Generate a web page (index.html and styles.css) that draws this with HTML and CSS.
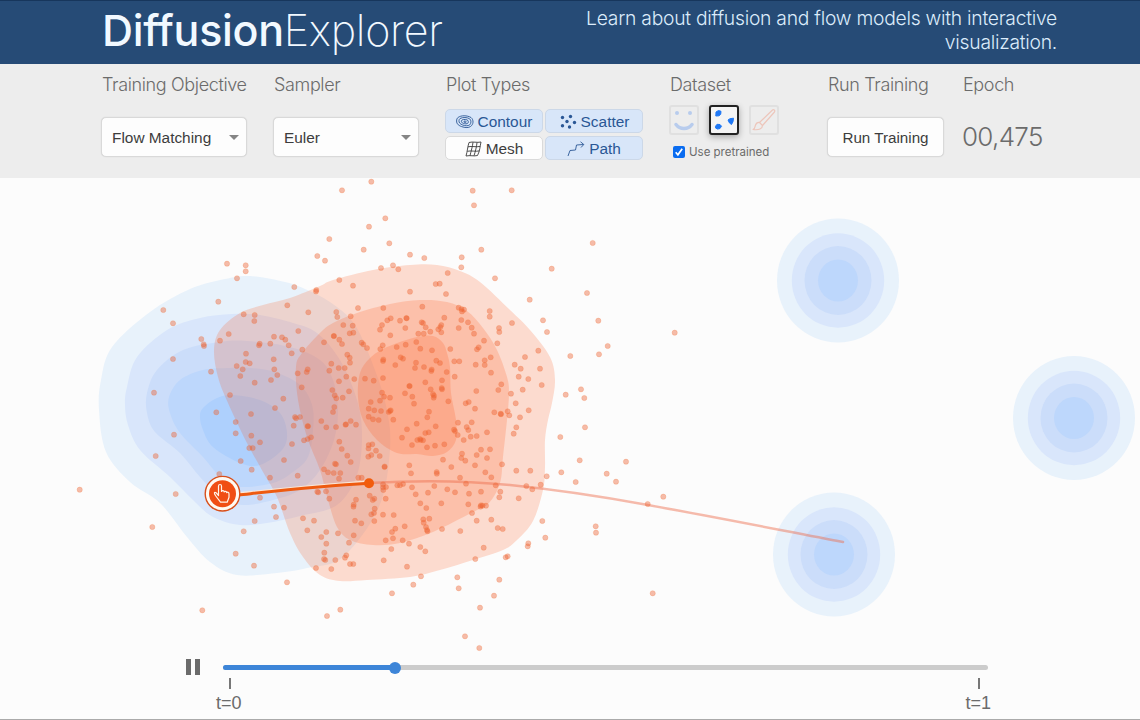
FILE: index.html
```html
<!DOCTYPE html>
<html lang="en">
<head>
    <meta charset="UTF-8" />
    <meta name="viewport" content="width=device-width, initial-scale=1.0" />
    <title>Diffusion Explorer</title>
    <link rel="stylesheet" href="styles.css">
</head>
<body>
    <header>
        <h1><strong>Diffusion</strong>Explorer</h1>
        <p>Learn about diffusion and flow models with interactive visualization.</p>
    </header>

    <section class="toolbar">
        <div class="control">
            <h2>Training Objective</h2>
            <button class="select">Flow Matching <span class="caret"></span></button>
        </div>
        <div class="control">
            <h2>Sampler</h2>
            <button class="select">Euler <span class="caret"></span></button>
        </div>
        <div class="control">
            <h2>Plot Types</h2>
            <div class="plot-types">
                <button class="toggle active">
                    <svg width="18" height="14" viewBox="0 0 18 14">
                        <path d="M2 2.5C5 .2 11 .2 15 2.5c3 2.5 2.500 7-.5 9-2 1.500-5 1.200-7.500.5C3 11 .5 9 .6 6 .6 4.500 1 3.200 2 2.500z" />
                        <path d="M4 3.500c3-1.500 7-1.200 9.500.2 2 1.600 1.800 4.600.2 6.200-1.700 1.300-5 .9-7 .1C4 9 2.700 7.500 3 5.500c.1-.9.400-1.500 1-2z" />
                        <path d="M6 5c2-1 5-.6 6 .6.8 1.300.2 2.700-1 3.100-1.500.3-3.500 0-4.700-.8C5.200 7 5 5.600 6 5z" />
                        <path d="M8 6.200c1-.3 2.300 0 2.300.7S8.700 7.500 8 7.200z" />
                    </svg>
                    Contour
                </button>
                <button class="toggle active">
                    <svg class="solid" width="18" height="16" viewBox="0 0 18 16">
                        <circle cx="3.500" cy="3.500" r="1.700" /><circle cx="11.500" cy="2.500" r="1.700" />
                        <circle cx="8" cy="7.500" r="1.700" /><circle cx="3.500" cy="11.800" r="1.700" />
                        <circle cx="15.500" cy="8.500" r="1.700" /><circle cx="10.500" cy="13" r="1.700" />
                    </svg>
                    Scatter
                </button>
                <button class="toggle">
                    <svg width="17" height="16" viewBox="0 0 17 16">
                        <path d="M4 1.500C8 .3 12 2 16 1c-1 4-1 9-3.500 13.500-4 1-7-.5-11.500.5C2.500 10 2.500 6 4 1.500z" />
                        <path d="M8 1.200C7.500 6 6 10 5 14.800M12 1.600C11.500 6 10.500 10 9 14.800M3 5.800c4-1 8 .6 12.200-.4M2.300 10.300c4-1 8 .6 12-.4" />
                    </svg>
                    Mesh
                </button>
                <button class="toggle active">
                    <svg width="18" height="16" viewBox="0 0 18 16">
                        <path d="M1 15l2-5.500 5.500-.5 1-5 7-.5M13.500.8l3.300 2.700-2.800 3" />
                    </svg>
                    Path
                </button>
            </div>
        </div>
        <div class="control">
            <h2>Dataset</h2>
            <div class="datasets">
                <button class="dataset">
                    <svg width="26" height="26" viewBox="0 0 26 26">
                        <circle cx="6" cy="6" r="2" fill="#1f6df0" /><circle cx="19" cy="6" r="2" fill="#1f6df0" />
                        <path d="M5 17.500c4 5.300 12 5.300 16 0" fill="none" stroke="#1f6df0" stroke-width="3.500" stroke-linecap="round" />
                    </svg>
                </button>
                <button class="dataset selected">
                    <svg width="26" height="26" viewBox="0 0 26 26">
                        <path d="M5 5l2.500-1.500 2.500.8-.3 3-1.700 1.500-3.200.2zM4.500 19.300l1.500-2 3 .2 1.500 1.700-1.500 2.300-2.500.6-2-1.200zM17 13l2-1.300 3.500-.5-.5 3.500-1.500 2.800-2-1.500z" fill="#1f78f5" stroke="#1f78f5" stroke-linejoin="round" />
                    </svg>
                </button>
                <button class="dataset">
                    <svg width="26" height="26" viewBox="0 0 26 26">
                        <path d="M8.500 15.500L21.500 3c1-1 3 .5 2 2L11.500 18.500zM8.500 15.500l3 3c0 3-3.500 5-9.500 4 2-1 2-2.500 2.300-4 .7-2 2.400-3.200 4.200-3z" fill="none" stroke="#f0562c" stroke-width="1.200" stroke-linejoin="round" />
                    </svg>
                </button>
            </div>
            <label class="pretrained">
                <svg width="12" height="12" viewBox="0 0 12 12">
                    <rect width="12" height="12" rx="2" fill="#0a6cf0" />
                    <path d="M2.700 6.300l2.200 2.500 4.300-6" fill="none" stroke="#fff" stroke-width="1.700" />
                </svg>
                Use pretrained
            </label>
        </div>
        <div class="control">
            <h2>Run Training</h2>
            <button class="run">Run Training</button>
        </div>
        <div class="control">
            <h2>Epoch</h2>
            <div class="epoch">00,475</div>
        </div>
    </section>

    <main>
        <svg class="plot" width="1140" height="477" viewBox="0 178 1140 477">
            <g id="targets"></g>
            <g id="source"></g>
            <g id="current" class="density"></g>
            <path class="path-rest" d="M369 483C420 480 470 481 510 485C560 490 610 498 648 505C715 517 780 530 843 542" />
            <g id="samples" class="samples"></g>
            <path class="path-edge" d="M240 493C285 489 320 484.500 369 481.500" />
            <path class="path-done" d="M238 495C285 490 320 486 369 483.300" />
            <circle cx="369" cy="483.300" r="5" fill="#f25c0c" />
            <g class="handle">
                <circle cx="222.500" cy="493.700" r="17.300" fill="#fffaf2" stroke="#d9501c" stroke-width="1.400" />
                <circle cx="222.500" cy="493.700" r="13.500" fill="#f04e14" />
                <path d="M218.500 495.500v-9.500c0-2 3-2 3 0v5.500c.6-1.300 2.500-1 2.700.4.700-1 2.300-.6 2.500.7.800-.8 2.300-.2 2.300 1.200v3.500l-1.800 4.900h-6.700l-4.700-6.200c-2.300-3-1.500-4.700.4-3.200z" />
            </g>
        </svg>

        <div class="player">
            <svg class="pause" width="14" height="16" viewBox="0 0 14 16"><path d="M0 0h5v16H0zM9 0h5v16H9z" /></svg>
            <div class="timeline">
                <div class="track"><div class="fill"></div></div>
                <div class="ticks"><span>t=0</span><span>t=1</span></div>
            </div>
        </div>
    </main>

    <script src="plot.js"></script>
</body>
</html>
```

FILE: styles.css
```css
* {
    box-sizing: border-box;
}
body {
    margin: 0;
    height: 720px;
    overflow: hidden;
    background: #fcfcfc;
    color: #6b6b6b;
    font-family: Inter, sans-serif;
    border-bottom: 1px solid #aaa;
}
header {
    display: flex;
    justify-content: space-between;
    height: 64px;
    padding: 0 83px 0 102px;
    background: #264b76;
    border-top: 1px solid #17365c;
    color: #f2f9ff;
}
h1 {
    margin: 0;
    font-size: 43px;
    font-weight: 200;
    line-height: 59px;
    letter-spacing: -0.3px;
}
h1 strong {
    font-weight: 500;
}
header p {
    width: 490px;
    margin: 6px 0 0;
    font-size: 19.300px;
    font-weight: 300;
    line-height: 23.5px;
    letter-spacing: -0.25px;
    text-align: right;
    color: #dcecfb;
}
.toolbar {
    display: grid;
    grid-template-columns: 172px 172px 224px 158px 135px 1fr;
    height: 114px;
    padding-left: 101px;
    background: #ededed;
}
h2 {
    margin: 0;
    padding: 10px 0 0 1px;
    font-size: 18px;
    font-weight: 300;
    line-height: 22px;
    letter-spacing: -0.36px;
    white-space: nowrap;
}
button {
    padding: 0;
    border: 1px solid #d9d9d9;
    border-radius: 5px;
    background: #fdfdfd;
    color: #3c3c3c;
    font-family: "Liberation Sans", Arial, sans-serif;
    font-size: 15.400px;
}
.select, .run {
    height: 40px;
    margin-top: 21px;
    box-shadow: 0 0 1px #ccc;
}
.select {
    display: flex;
    align-items: center;
    justify-content: space-between;
    width: 146px;
    padding: 1px 7px 0 10px;
}
.caret {
    border: 5px solid transparent;
    border-top-color: #858585;
    border-bottom: 0;
}
.run {
    width: 117px;
    font-size: 15.200px;
}
.plot-types {
    display: grid;
    grid-template-columns: 98px 98px;
    gap: 3px 2px;
    margin-top: 13px;
}
.toggle {
    display: flex;
    align-items: center;
    justify-content: center;
    gap: 4px;
    height: 24px;
    padding-top: 1px;
    border-color: #dadada;
}
.toggle.active {
    background: #d8e6f9;
    border-color: #ccd8e8;
    color: #2a5795;
}
.toggle svg {
    fill: none;
    stroke: currentColor;
    stroke-width: 0.9;
}
.toggle .solid {
    fill: currentColor;
    stroke: none;
}
.datasets {
    display: flex;
    gap: 10px;
    margin-top: 9px;
}
.dataset {
    display: flex;
    align-items: center;
    justify-content: center;
    width: 30px;
    height: 30px;
    border: 2px solid #bbb;
    border-radius: 3px;
    background: #efefef;
    opacity: 0.25;
}
.dataset.selected {
    border-color: #222;
    background: #f4f4f4;
    box-shadow: 0 2px 6px rgba(0, 0, 0, 0.3);
    opacity: 1;
}
.pretrained {
    display: flex;
    align-items: center;
    gap: 4px;
    margin: 10px 0 0 4px;
    font-size: 11.500px;
    line-height: 14px;
}
.epoch {
    margin-top: 21px;
    font-size: 26px;
    font-weight: 300;
    line-height: 40px;
    letter-spacing: -0.7px;
}
.plot {
    display: block;
}
.density path {
    fill: #ff4d0c;
    fill-opacity: 0.185;
}
.samples circle {
    fill: #ec5a2a;
    fill-opacity: 0.4;
    stroke: #f4783c;
    stroke-opacity: 0.25;
}
.path-rest, .path-edge, .path-done {
    fill: none;
    stroke-linecap: round;
}
.path-rest {
    stroke: #ee6a4a;
    stroke-opacity: 0.45;
    stroke-width: 2.500;
}
.path-edge {
    stroke: #fbe6d6;
    stroke-width: 2;
}
.path-done {
    stroke: #ee5a10;
    stroke-width: 3;
}
.handle path {
    fill: none;
    stroke: #fff3e8;
    stroke-width: 1.200;
    stroke-linejoin: round;
}
.player {
    display: flex;
    align-items: flex-start;
    gap: 23px;
    padding: 4px 0 0 186px;
}
.pause {
    fill: #6b6b6b;
}
.timeline {
    width: 765px;
    padding-top: 6px;
}
.track {
    height: 5px;
    border-radius: 3px;
    background: #ccc;
}
.fill {
    position: relative;
    width: 172px;
    height: 5px;
    border-radius: 3px;
    background: #3d85d8;
}
.fill::after {
    content: "";
    position: absolute;
    right: -6px;
    top: -3px;
    width: 12px;
    height: 12px;
    border-radius: 50%;
    background: #3d85d8;
}
.ticks {
    display: flex;
    justify-content: space-between;
    margin: 8px -3px 0 -7px;
    font-family: "Liberation Sans", Arial, sans-serif;
    font-size: 18px;
    line-height: 20px;
}
.ticks span {
    display: flex;
    flex-direction: column;
    align-items: center;
    gap: 4px;
}
.ticks span::before {
    content: "";
    width: 2px;
    height: 11px;
    margin-left: 2px;
    background: #777;
}
```

FILE: plot.js
```js
const SVG_NS = 'http://www.w3.org/2000/svg';

// target distribution: three blobs
const targets = [[838, 280.5], [1074, 418], [834, 554.5]];
const targetRings = [[61, '#e8f2fb'], [46.2, '#d9e6fb'], [33.5, '#cbddfa'], [20, '#bdd7fc']];

// source distribution, outermost contour first
const source = [
    ['#e8f2fb', [[99,410],[101,380],[112,347],[150,312],[190,289],[225,279],[250,276],[285,282],[305,289],[330,302],[355,325],[375,370],[387,410],[390,450],[379,507],[343,557],[307,568],[277,573],[237,575],[210,562],[187,537],[160,503],[130,482],[106,452]]],
    ['#d9e6fb', [[125,405],[127,387],[137,357],[167,330],[200,318],[232,314],[260,315],[293,323],[317,333],[340,360],[357,400],[362,435],[357,475],[337,505],[300,516],[267,523],[240,525],[213,517],[193,500],[170,477],[140,450],[128,425]]],
    ['#cbddfa', [[147,393],[157,370],[183,350],[220,342],[247,341],[290,347],[320,360],[333,380],[338,410],[334,440],[320,470],[300,490],[273,500],[243,505],[220,497],[200,477],[180,453],[155,432],[147,413]]],
    ['#bdd7fc', [[169,397],[180,380],[203,370],[230,368],[250,368],[275,372],[300,385],[312,405],[313,430],[308,457],[293,472],[273,483],[240,487],[223,480],[203,457],[180,433],[170,413]]],
    ['#aed0fd', [[200,417],[203,408],[217,398],[233,395],[260,400],[280,413],[287,433],[282,450],[260,465],[240,463],[213,447],[203,430]]]
];

// density of the samples at the current time
const current = [
    [[333,280],[320,286],[290,298],[263,305],[240,313],[220,330],[214,350],[218,377],[228,403],[247,443],[263,472],[277,497],[290,533],[303,557],[320,575],[340,581],[367,580],[410,577],[440,570],[473,560],[503,550],[517,540],[533,521],[543,490],[545,467],[545,440],[548,420],[552,403],[555,380],[550,357],[530,330],[510,310],[480,282],[460,271],[437,265],[410,265],[373,270]],
    [[390,304],[357,313],[333,323],[320,333],[302,353],[296,367],[298,400],[307,437],[320,470],[328,500],[337,527],[350,540],[373,545],[400,543],[433,532],[473,512],[489,503],[500,483],[503,457],[507,420],[509,393],[507,377],[497,350],[483,328],[467,311],[447,302],[420,300]],
    [[417,337],[433,336],[443,343],[447,353],[450,367],[451,393],[456,420],[456,440],[447,452],[433,456],[417,454],[397,453],[377,440],[363,420],[358,397],[360,373],[370,358],[387,347]]
];

const samples = [
    [227,263.7],[245.7,265.3],[245.7,271.3],[237,278.3],[317.3,256],[294.3,287],[316.3,290],[316,291.5],[218.3,301.7],[163.3,310],
    [173,323.3],[287.3,305.3],[308.3,312.3],[243.7,314.3],[254.7,315],[254.3,321],[298.3,331],[228.7,334],[220,340.7],[201.3,339],
    [203.7,344.3],[204,346],[173,359],[274,336.7],[282,337.3],[285.3,339.7],[288.7,345.3],[270.3,343.7],[259.7,343.7],[259,345.3],
    [291.7,353.3],[302.3,349.7],[246,353.7],[273.7,359.3],[245.7,362],[249.7,363.3],[236.7,366],[242.7,369.3],[240.3,376],[211,371.7],
    [274.3,369.3],[277.3,375],[271,380],[297.7,373.3],[307.7,369.3],[306.7,372],[254.7,382.7],[301.7,387.3],[154,392.7],[230,395],
    [283.3,398.7],[275,408],[216.3,412.3],[251,414],[295,417],[296,418.3],[300,417],[235.7,422],[235.7,433.3],[251.3,435.7],
    [260,442.3],[249.3,448],[252.7,448],[240.7,461],[251.7,469.7],[219.3,474],[270,477.7],[284,460],[297.7,475.7],[292,444],
    [293.7,425.7],[307.7,426],[308,426.3],[304,440.3],[307.7,439],[311,437.3],[174,434.7],[155.7,456],[79.7,489.7],[175.7,494],
    [152.3,527],[260,497.7],[274,506.7],[284,507.7],[276,517],[254.7,521],[243.7,531.3],[235.7,553.7],[254,565.7],[303,518.3],
    [314,520.7],[307.3,530.3],[316,568],[287,582.3],[202.3,610.3],[317.3,491.7],
    [342,190.3],[371.3,181.7],[472.7,190.7],[474,205.3],[385.3,218.3],[369,226.7],[329.3,239],[389.3,243.3],[363.7,249.7],[325,260.7],
    [410,254.7],[424.3,258],[381,268],[393,265.3],[398.3,269.3],[461.7,257.3],[461.3,267.3],[481.3,249.7],[447.7,273],[495,278.3],
    [339.3,280],[353,285.7],[435.7,284],[439.7,283.7],[446,294],[410,291.7],[358,308],[383.3,308],[422.3,306.7],[336.3,312],
    [337.3,317],[350.7,316.3],[343.3,325],[352.7,325.7],[349.7,333.3],[353.3,332.7],[333.7,336],[334,336],[339.3,339.7],[342,344],
    [324,342.3],[347.3,354.7],[349.7,357.7],[361.7,342.7],[363.3,344.3],[367,348],[382,325],[380,329.7],[387.3,320.3],[390.7,318.3],
    [400,320.7],[406.3,318],[406.7,318.3],[405.3,328],[390.3,335.3],[382.7,345.3],[380.3,349],[396.7,347],[405.7,344.7],[416.3,342],
    [420.3,348.7],[432,350.3],[418.3,333.7],[423.7,333.7],[421.7,322.3],[423,323],[425.7,327.3],[430.3,331.7],[444.3,317.7],[441.3,325],
    [440.3,327],[438.3,329.3],[441.3,332.3],[450.3,349],[458.7,307.7],[461.5,309],[462,311.5],[464,309.7],[461.3,320],[458.7,328],
    [468,322.3],[471.7,327.7],[474,333.7],[478.7,347.3],[477,349.3],[484,340.7],[489.7,311],[489.7,316.7],[497.3,343.3],[490.7,357.3],
    [383.3,359.5],[383,361],[400.7,357.3],[403,358.7],[395.3,365],[331.3,363.7],[329.3,370.7],[338.7,368],[344.7,368],[346.3,376.7],
    [350,362.7],[354.3,379],[365,378.7],[339,381.3],[373.7,380.7],[383,378],[416,362.7],[415,368],[424,367],[431.7,369.5],
    [431.3,371],[436.3,360.7],[440,363],[446.7,372],[454.3,361.3],[459.3,361.3],[454.7,376.7],[484.7,360.3],[484.7,365],[475.7,364.7],
    [491,372.7],[409.7,386],[409.3,386],[425.3,382.3],[442,380.3],[441.7,388],[442,389.3],[430.7,389.3],[433,394],[434,395.7],
    [433.7,397.7],[405,393.3],[412.3,396.7],[414,403.7],[448.3,401.3],[476.3,391],[498.3,390],[332.3,390],[334.7,395.3],[336.3,398.3],
    [342.7,397.7],[349,391.3],[334.3,407],[333,412],[321.3,421],[326.3,427.3],[336,427],[346,424.3],[345.5,424.7],[350.7,421],
    [356,424.7],[382,392.7],[384,396.7],[390,397.7],[380,400.7],[370.7,402],[368.7,408.7],[374.3,410.3],[381,411],[390.7,410.3],
    [390,411],[388.7,412],[368.7,416.7],[373,419.3],[378.7,420],[393.3,419.7],[429,411.7],[427.3,417.3],[416.7,423.7],[407,429.3],
    [435.7,426.3],[425.3,433],[428.7,432.3],[402,437.7],[412,445],[417.3,440],[420,439],[420.7,440],[423,440.3],[427,447.3],
    [435,445.7],[444.3,444.3],[465.7,403.3],[468.7,402],[475,408.7],[494.3,412.3],[500.7,413.7],[501,414.3],[458,422.7],
    [454,429.7],[455,431],[457.7,435],[463.7,440],[471.7,422.3],[466.7,427],[468.3,430],[470.7,436.7],[476.7,436],[487,432.3],
    [339.3,441.7],[341.7,449],[347.3,455.7],[350.7,462],[335,463.7],[336,464.3],[324,469.3],[328,472.3],[333.7,473],[340.3,473],
    [339,478.7],[358.3,477.7],[361.7,477.7],[368.7,445],[372.3,444.3],[368.5,448.5],[376,450.7],[368.3,456.7],[371.3,455],[379.7,456],
    [384.7,466.5],[384.5,467],[409.3,465.3],[411,473.3],[436.7,472],[436.8,473.7],[443,459.7],[451.3,467],[462,453.7],[461.3,458],
    [465.3,460.7],[476.7,455],[481,449.7],[490,449.3],[487,458],[475,465.3],[485.3,472.3],[491.3,477.3],[460,477.7],[466,483.7],
    [383,484.3],[383.3,490],[383,487.3],[386,487],[397.3,485.3],[400,485.3],[403,484],[412,487.3],[434.3,486],[415.7,494.3],
    [428,492.7],[447.3,489.3],[455,492.3],[469,493.7],[481,491.7],[495.7,485.3],[318.3,492.3],[326,491.3],
    [329.3,498.7],[356,499.7],[353.7,504.7],[353.5,506.7],[369.7,495.7],[372.7,500],[374.3,498.7],[385.7,498.7],[374.7,508.7],[374,513],
    [371.3,514.3],[374.3,521],[383,514.7],[393.7,515],[420.3,503.3],[426.3,508],[441.3,503.3],[468.3,504.3],[481,505.3],[480.5,506.7],
    [482.5,505.7],[486,505.7],[500.3,491.7],[499.3,497.3],[472,513],[476.7,520.7],[491.3,519.7],[497.7,528],[502.7,529],[518.7,498.3],
    [355,520.7],[361.3,523.3],[326.3,532],[321.3,537],[338,533.3],[353.7,535.3],[349,542.7],[326.3,543.7],[324.3,552.7],[324,559],
    [325.3,560],[335.3,560],[331.3,569],[346.3,555.3],[345,557.7],[350,564],[353.3,564],[383.7,560.3],[391.3,549],[385.7,540.3],
    [393,538.3],[392,532],[395.3,528.7],[404.7,526.3],[402.7,540.3],[409,543.7],[420.3,547],[425.3,551.3],[407,566.7],[421,576.3],
    [413.3,584.7],[392,593.3],[423.3,519.3],[429.3,518.7],[423.7,522.7],[426,527],[427,530],[427.5,531.3],[442,529],[460.3,531],
    [483.7,547.7],[475.3,559],[505.7,557.3],[507.7,556.3],[457.3,577.3],[458.7,588.3],[499.3,579.7],[494,595.7],[480,607.7],[465,636.3],
    [479.3,648],[340.3,609.7],[327,616],
    [511.7,190.3],[592.7,243],[551.7,268.7],[587,293],[529.7,299.7],[543,320.3],[598.3,320.7],[674.7,332.7],[547,332],[512,323],
    [499,328],[499.3,332],[538.3,350.7],[525,357],[570.3,356],[607.7,346],[599,354.3],[514.7,364.7],[520.7,368.7],[518.7,376.7],
    [540,368.7],[528.3,379],[541.7,385],[522.7,389.7],[511,393.7],[501.3,384.3],[515.7,403.3],[528.7,410.3],[520,417.3],[507.7,411.3],
    [509.3,415.3],[565.7,394.7],[581,389.3],[584.3,398],[585,427.3],[560.3,437],[516.3,427.3],[513.7,433.7],[579.7,460.3],[626,461.7],
    [606.7,473.7],[616,481.7],[561.3,472.3],[575.7,482],[546.7,476.3],[530.3,470.7],[516.3,470.7],[502,464.3],[526.3,486],[532.3,489.3],
    [540.7,484.7],[663.3,496.7],[647.7,504],[542.3,521],[595.7,526.3],[596,532.7],[545.3,537.7],[528.3,543.3],[527.7,546.3],[652.7,593.3]
];

function add(parent, tag, attrs) {
    const el = document.createElementNS(SVG_NS, tag);
    for (const key in attrs) {
        el.setAttribute(key, attrs[key]);
    }
    document.getElementById(parent).appendChild(el);
}

// closed Catmull-Rom spline through the points
function closedCurve(points) {
    const n = points.length;
    let d = `M${points[0]}`;
    for (let i = 0; i < n; i++) {
        const a = points[(i + n - 1) % n];
        const b = points[i];
        const c = points[(i + 1) % n];
        const e = points[(i + 2) % n];
        d += `C${b[0] + (c[0] - a[0]) / 6},${b[1] + (c[1] - a[1]) / 6} ${c[0] - (e[0] - b[0]) / 6},${c[1] - (e[1] - b[1]) / 6} ${c}`;
    }
    return d + 'Z';
}

targets.forEach(([cx, cy]) => {
    targetRings.forEach(([r, fill]) => add('targets', 'ellipse', { cx, cy, rx: r, ry: r + 1, fill }));
});
source.forEach(([fill, points]) => add('source', 'path', { d: closedCurve(points), fill }));
current.forEach(points => add('current', 'path', { d: closedCurve(points) }));
samples.forEach(([cx, cy]) => add('samples', 'circle', { cx, cy, r: 2.6 }));
```
